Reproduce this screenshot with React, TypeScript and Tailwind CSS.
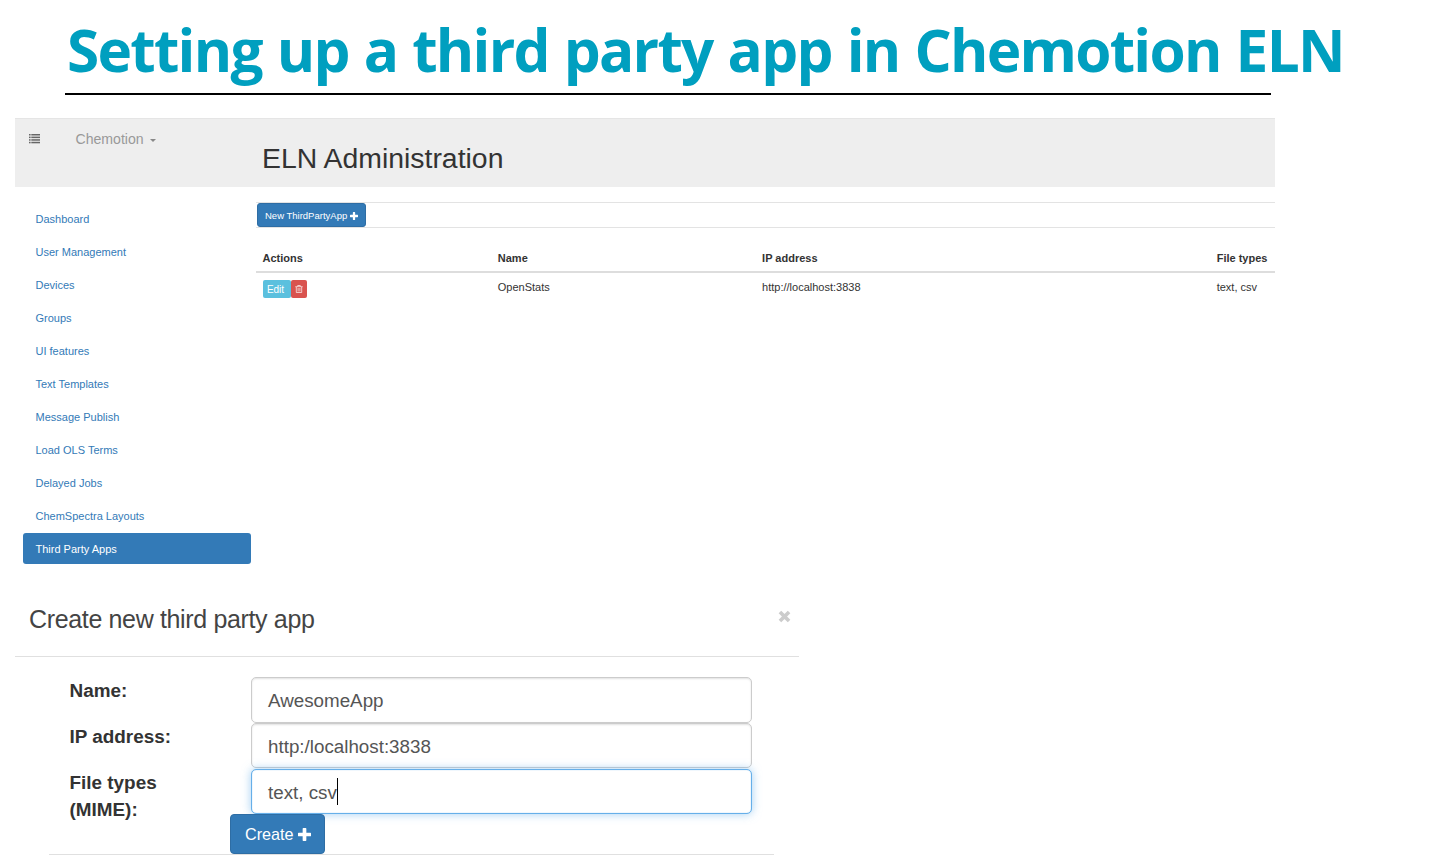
import type { ReactNode } from 'react'
import clsx from 'clsx'

const navItems = [
  'Dashboard',
  'User Management',
  'Devices',
  'Groups',
  'UI features',
  'Text Templates',
  'Message Publish',
  'Load OLS Terms',
  'Delayed Jobs',
  'ChemSpectra Layouts',
  'Third Party Apps',
]

const columns = 'grid grid-cols-[235.3px_264.3px_454.6px_1fr] pl-[6.5px]'

function ListIcon() {
  return (
    <svg className="block" width="11" height="10" viewBox="0 0 11 10" fill="#666">
      {[0, 2.6, 5.2, 7.8].map((y) => (
        <g key={y}>
          <rect x="0" y={y} width="1.6" height="1.5" />
          <rect x="2.3" y={y} width="8.7" height="1.5" />
        </g>
      ))}
    </svg>
  )
}

function PlusIcon({ size }: { size: number }) {
  return (
    <svg className="block" width={size} height={size} viewBox="0 0 12 12" fill="#fff">
      <path d="M4.9 0h2.2q.6 0 .6.6v3.7h3.7q.6 0 .6.6v2.2q0 .6-.6.6H7.7v3.7q0 .6-.6.6H4.9q-.6 0-.6-.6V7.7H.6Q0 7.7 0 7.1V4.9q0-.6.6-.6h3.7V.6q0-.6.6-.6z" />
    </svg>
  )
}

function TrashIcon() {
  return (
    <svg className="block" width="8" height="8" viewBox="0 0 8 8" fill="none" stroke="#fff" strokeOpacity=".85">
      <path d="M.3 1.7h7.4M2.7 1.5V.5h2.6v1M1.3 2v5.5h5.4V2M3.1 3v3.5M4.9 3v3.5" strokeWidth=".8" />
    </svg>
  )
}

function TopBar() {
  return (
    <header className="flex h-[68.5px] border-t border-[#e5e5e5] bg-[#eee]">
      <div className="pl-3.5 pt-[14.5px]">
        <ListIcon />
      </div>
      <div className="flex h-[41px] w-[222px] items-center pl-[35.5px] text-[14.1px] text-[#999]">
        Chemotion
        <span className="ml-1.5 mt-0.5 border-x-[3px] border-t-[3px] border-x-transparent border-t-[#888]" />
      </div>
      <h1 className="pt-[18.5px] text-[28.4px] leading-[40px] text-[#333]">ELN Administration</h1>
    </header>
  )
}

function Sidebar() {
  return (
    <nav className="mt-4 flex w-[228px] flex-col gap-[1.5px] text-[11px]">
      {navItems.map((item) => (
        <a
          key={item}
          className={clsx(
            'flex h-[31.5px] items-center rounded-[3px] pt-px pl-[12.5px]',
            item === 'Third Party Apps' ? 'bg-[#337ab7] text-white' : 'text-[#337ab7]',
          )}
        >
          {item}
        </a>
      ))}
    </nav>
  )
}

function AppsTable() {
  return (
    <main className="mt-[15.5px] w-[1019px] text-[11px] text-[#333]">
      <div className="h-[26px] border-y border-[#e3e3e3]">
        <button
          type="button"
          className="ml-[0.5px] flex h-6 w-[109.5px] items-center gap-[2.5px] rounded-[3px] border border-[#2e6da4] bg-[#337ab7] pt-[2px] pl-[7.5px] text-[9.5px] whitespace-nowrap text-white"
        >
          New ThirdPartyApp
          <PlusIcon size={8} />
        </button>
      </div>
      <div className={`${columns} mt-[14.5px] h-[30.5px] border-b-2 border-[#ddd] pt-[7px] font-bold`}>
        <span>Actions</span>
        <span>Name</span>
        <span>IP address</span>
        <span className="whitespace-nowrap">File types</span>
      </div>
      <div className={`${columns} pt-[6px]`}>
        <span className="flex pt-px">
          <button type="button" className="flex h-[18px] w-7 items-center justify-center rounded-[2px] bg-[#5bc0de] pr-[2px] text-[10px] text-white">
            Edit
          </button>
          <button type="button" className="ml-[0.5px] flex h-[18px] w-4 items-center justify-center rounded-[2px] bg-[#d9534f]">
            <TrashIcon />
          </button>
        </span>
        <span>OpenStats</span>
        <span>http://localhost:3838</span>
        <span>text, csv</span>
      </div>
    </main>
  )
}

interface FieldProps {
  label: ReactNode
  value: string
  focused?: boolean
}

function Field({ label, value, focused }: FieldProps) {
  return (
    <div className="flex h-[45.8px]">
      <label className="w-[181.5px] text-[18.9px] leading-[27px] font-bold text-[#333]">{label}</label>
      <div
        className={clsx(
          'flex h-[45.5px] w-[501px] items-center rounded-[5px] border bg-white pt-[3px] pl-4 text-[18.8px] text-[#555]',
          focused
            ? 'border-[#66afe9] shadow-[inset_0_0_1px_#66afe9,0_0_10px_rgba(102,175,233,0.6)]'
            : 'border-[#ccc] shadow-[inset_0_1px_2px_rgba(0,0,0,0.12)]',
        )}
      >
        {value}
        {focused && <span className="-mt-[3px] h-[27px] w-px bg-black" />}
      </div>
    </div>
  )
}

function CreateDialog() {
  return (
    <section className="ml-[15px] w-[784px]">
      <div className="flex h-[60px] justify-between border-b border-[#e0e0e0] pr-2 pl-3.5">
        <h2 className="pt-[7px] text-[25px] leading-[30px] tracking-[-0.35px] text-[#444]">Create new third party app</h2>
        <svg className="mt-[13px]" width="13" height="13" viewBox="0 0 12 12">
          <path d="M1.8 1.8l8.4 8.4M10.2 1.8l-8.4 8.4" stroke="#ccc" strokeWidth="3.4" />
        </svg>
      </div>
      <form className="mt-5 ml-[34px] w-[725px] border-b border-[#e0e0e0]">
        <div className="pl-[20.5px]">
          <Field label="Name:" value="AwesomeApp" />
          <Field label="IP address:" value="http:/localhost:3838" />
          <Field
            label={
              <>
                File types
                <br />
                (MIME):
              </>
            }
            value="text, csv"
            focused
          />
        </div>
        <button
          type="button"
          className="relative ml-[180.5px] flex h-10 w-[95px] items-center gap-1 rounded-[4px] border border-[#2e6da4] bg-[#337ab7] pl-[14.5px] text-[16.2px] text-white"
        >
          Create
          <PlusIcon size={13} />
        </button>
      </form>
    </section>
  )
}

export default function App() {
  return (
    <div className="h-[862px] w-[1443px] overflow-hidden bg-white font-['Liberation_Sans',Arial,sans-serif]">
      <h1 className="h-[93px] pt-[9px] pl-[67px] font-['Open_Sans','Noto_Sans',sans-serif] text-[58.5px] leading-[80px] font-bold tracking-[-1.74px] [word-spacing:1.5px] whitespace-nowrap text-[#009fbf]">
        Setting up a third party app in Chemotion ELN
      </h1>
      <div className="ml-[65px] h-[2px] w-[1206px] bg-black" />
      <div className="mt-[23px] ml-[15px] w-[1260px]">
        <TopBar />
        <div className="flex h-[410.5px] gap-[5px] pl-2">
          <Sidebar />
          <AppsTable />
        </div>
      </div>
      <CreateDialog />
    </div>
  )
}
